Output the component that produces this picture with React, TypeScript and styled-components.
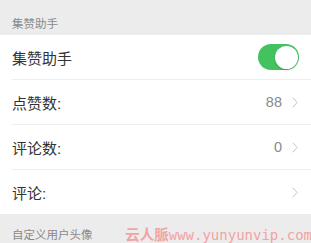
import React from "react";
import styled, { createGlobalStyle } from "styled-components";

const Global = createGlobalStyle`
  html, body { margin: 0; padding: 0; background: #ececec; }
  body { font-family: "Liberation Sans", "Noto Sans CJK SC", sans-serif; }
`;

const Page = styled.div`
  position: relative;
  width: 311px;
  height: 243px;
  overflow: hidden;
  background: #ececec;
`;

const SectionHeader = styled.div<{ $h: number; $pt: number }>`
  height: ${(p) => p.$h}px;
  box-sizing: border-box;
  padding: ${(p) => p.$pt}px 12px 0;
  font-size: 11.5px;
  color: #8a8a8a;
  line-height: 14px;
`;

const Group = styled.div`
  background: #fff;
  display: flex;
  flex-direction: column;
`;

const Row = styled.div<{ $last?: boolean }>`
  height: 44px;
  display: flex;
  align-items: center;
  padding: 0 12px;
  position: relative;
  border-bottom: ${(p) => (p.$last ? "none" : "1px solid transparent")};
  &::after {
    content: "";
    display: ${(p) => (p.$last ? "none" : "block")};
    position: absolute;
    left: 12px;
    right: 0;
    bottom: -1px;
    height: 1px;
    background: #efefef;
  }
`;

const Label = styled.div`
  flex: 1;
  font-size: 15px;
  color: #333;
`;

const Value = styled.div`
  font-size: 14.5px;
  color: #8a8a8a;
  margin-right: 10px;
`;

const Chevron = () => (
  <svg width="6" height="11" viewBox="0 0 6 11" style={{ marginRight: 1 }}>
    <path d="M0.7 0.7 L5.2 5.5 L0.7 10.3" fill="none" stroke="#c4c4c8" strokeWidth="1" />
  </svg>
);

const Switch = styled.div<{ $on: boolean }>`
  width: 41px;
  height: 26px;
  border-radius: 13px;
  background: ${(p) => (p.$on ? "#43c25f" : "#e5e5ea")};
  position: relative;
  &::after {
    content: "";
    position: absolute;
    top: 1.5px;
    left: ${(p) => (p.$on ? "16.5px" : "1.5px")};
    width: 23px;
    height: 23px;
    border-radius: 50%;
    background: #fff;
    box-shadow: 0 1px 2px rgba(0, 0, 0, 0.2);
  }
`;

const Watermark = styled.div`
  position: absolute;
  right: -1px;
  bottom: -2px;
  font-family: "DejaVu Sans Mono", "Noto Sans CJK SC", monospace;
  font-size: 14px;
  color: #f2a3a3;
  white-space: nowrap;
  line-height: 20px;
`;

const Cjk = styled.span`
  font-family: "Noto Sans CJK SC", sans-serif;
  font-weight: 700;
  font-size: 14.5px;
`;

export default function App() {
  return (
    <Page>
      <Global />
      <SectionHeader $h={35} $pt={17}>集赞助手</SectionHeader>
      <Group>
        <Row>
          <Label>集赞助手</Label>
          <Switch $on />
        </Row>
        <Row>
          <Label>点赞数:</Label>
          <Value>88</Value>
          <Chevron />
        </Row>
        <Row>
          <Label>评论数:</Label>
          <Value>0</Value>
          <Chevron />
        </Row>
        <Row $last>
          <Label>评论:</Label>
          <Chevron />
        </Row>
      </Group>
      <SectionHeader $h={30} $pt={14}>自定义用户头像</SectionHeader>
      <Watermark>
        <Cjk>云人脈</Cjk>www.yunyunvip.com
      </Watermark>
    </Page>
  );
}
